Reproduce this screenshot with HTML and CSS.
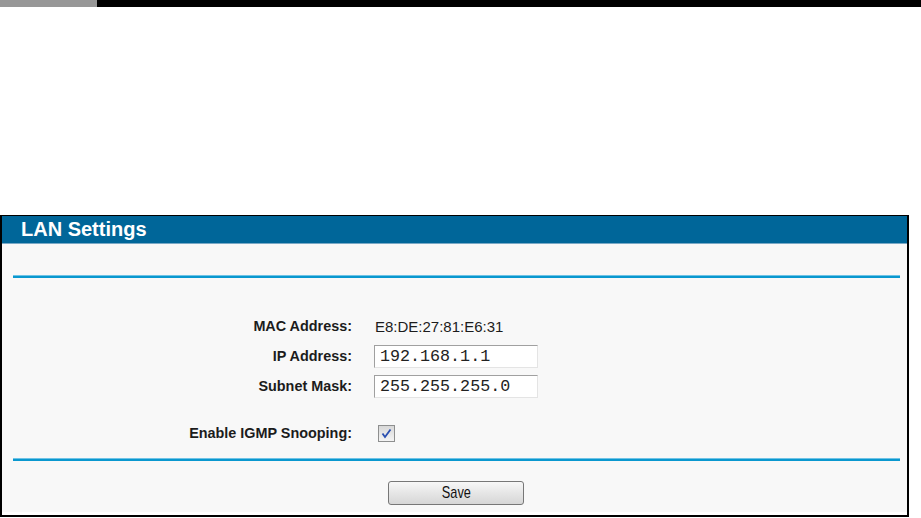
FILE: index.html
```html
<!DOCTYPE html>
<html lang="en">

<head>
    <title>LAN Settings</title>
    <meta charset="UTF-8">
    <meta name="viewport" content="width=device-width, initial-scale=1">
    <link rel="stylesheet" href="styles.css">
</head>

<body>
    <div class="topbar">
        <div class="topbar-tab"></div>
        <div class="topbar-rest"></div>
    </div>
    <div class="panel">
        <div class="panel-title">LAN Settings</div>
        <div class="panel-body">
            <div class="rule"></div>
            <div class="row first">
                <label class="label">MAC Address:</label>
                <span class="value">E8:DE:27:81:E6:31</span>
            </div>
            <div class="row">
                <label class="label">IP Address:</label>
                <input class="field" type="text" value="192.168.1.1">
            </div>
            <div class="row">
                <label class="label">Subnet Mask:</label>
                <input class="field" type="text" value="255.255.255.0">
            </div>
            <div class="row igmp">
                <label class="label">Enable IGMP Snooping:</label>
                <span class="check">
                    <svg width="11" height="11" viewBox="0 0 11 11">
                        <path d="M1.5 5.5 L4 9 L9.5 1.5" fill="none" stroke="#2a4fb0" stroke-width="1.8" />
                    </svg>
                </span>
            </div>
            <div class="rule bottom"></div>
            <div class="actions">
                <button class="save" type="button"><span class="save-text">Save</span></button>
            </div>
        </div>
    </div>
</body>

</html>
```

FILE: styles.css
```css
body {
    margin: 0;
    background: #fff;
    font-family: "Liberation Sans", Arial, sans-serif;
}

.topbar {
    display: flex;
    height: 7px;
}

.topbar-tab {
    width: 97px;
    background: #979797;
}

.topbar-rest {
    flex: 1;
    background: #000;
}

.panel {
    width: 905px;
    margin-top: 208px;
    border: 2px solid #000;
    border-top-width: 1px;
    background: #fff;
}

.panel-title {
    height: 27px;
    line-height: 27px;
    padding-left: 19px;
    background: #006699;
    border-bottom: 1px solid #7aa9c6;
    color: #fff;
    font-size: 20px;
    font-weight: bold;
}

.panel-body {
    background: #f8f8f8;
    padding-top: 31px;
    padding-bottom: 7px;
    margin-bottom: 3px;
}

.rule {
    height: 3px;
    margin: 0 7px 0 11px;
    background: #0a98cf;
    border-top: 1px solid #6fc3e6;
    box-sizing: border-box;
}

.row {
    display: flex;
    align-items: center;
    height: 30px;
}

.row.first {
    margin-top: 33px;
}

.row.igmp {
    margin-top: 17px;
}

.label {
    width: 350px;
    margin-right: 22px;
    text-align: right;
    font-size: 14.4px;
    font-weight: bold;
    color: #1c1c1c;
}

.value {
    padding-left: 1px;
    font-size: 15px;
    color: #1c1c1c;
}

.field {
    width: 164px;
    height: 23px;
    box-sizing: border-box;
    margin: 0;
    padding: 0 0 0 5px;
    border: 1px solid #e4e4e4;
    border-top-color: #a0a0a0;
    border-left-color: #a0a0a0;
    background: #fff;
    font-family: "Liberation Mono", "Courier New", monospace;
    font-size: 16.7px;
    color: #222;
}

.check {
    display: flex;
    align-items: center;
    justify-content: center;
    width: 15px;
    height: 15px;
    margin-left: 4px;
    border: 1px solid #8e8f8f;
    background: linear-gradient(#d8d8d8, #f4f4f4);
}

.rule.bottom {
    margin-top: 10px;
}

.actions {
    display: flex;
    justify-content: center;
    margin-top: 20px;
    padding-left: 3px;
}

.save {
    width: 136px;
    height: 24px;
    padding: 0;
    border: 1px solid #777;
    border-radius: 3px;
    background: linear-gradient(#f7f7f7, #e6e6e6 50%, #d6d6d6);
    font-family: "Liberation Sans", Arial, sans-serif;
    color: #111;
}

.save-text {
    display: inline-block;
    font-size: 17px;
    transform: scaleX(0.75);
}
```
